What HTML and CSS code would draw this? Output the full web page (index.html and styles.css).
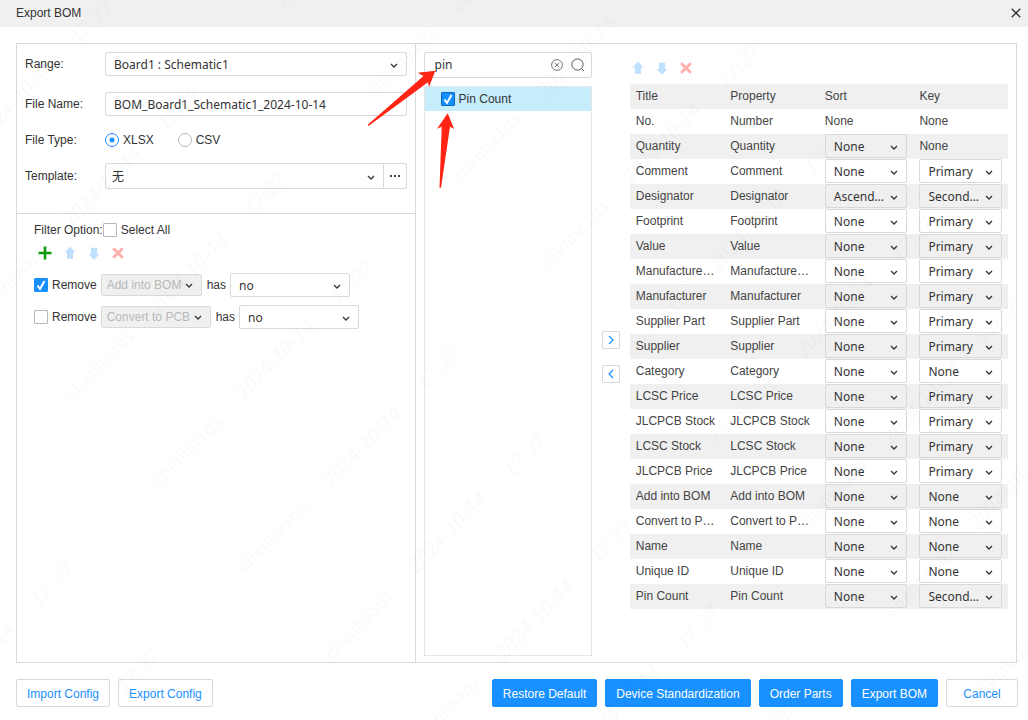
FILE: index.html
```html
<!DOCTYPE html>
<html lang="en">
<head>
<meta charset="utf-8">
<title>Export BOM</title>
<link rel="stylesheet" href="styles.css">
</head>
<body>
<svg class="sprite" aria-hidden="true">
  <symbol id="i-up" viewBox="0 0 12 14"><path d="M6 .8L11.500 6.500H9V12.800H3V6.500H.5Z" fill="#bfdfff"/></symbol>
  <symbol id="i-down" viewBox="0 0 12 14"><path d="M6 13.800L.5 8H3V1.800H9V8H11.500Z" fill="#bfdfff"/></symbol>
  <symbol id="i-x" viewBox="0 0 12 12"><path d="M1.200 1.200L10.800 10.800M10.800 1.200L1.200 10.800" stroke="#ffb0b0" stroke-width="3"/></symbol>
  <symbol id="i-plus" viewBox="0 0 14 14"><path d="M7 .5V13.500M.5 7H13.500" stroke="#0a9b0a" stroke-width="2.600"/></symbol>
</svg>

<header class="titlebar">
  <h1 class="title">Export BOM</h1>
  <button class="close" type="button" aria-label="Close"><svg width="10" height="10" viewBox="0 0 10 10"><path d="M.7 .7L9.300 9.300M9.300 .7L.7 9.300" stroke="#333" stroke-width="1.300"/></svg></button>
</header>

<main class="panel">
  <section class="left">
    <form class="settings">
      <div class="field"><label class="label" for="range">Range:</label>
        <select class="select grow" id="range"><option>Board1 : Schematic1</option></select></div>
      <div class="field"><label class="label" for="fname">File Name:</label>
        <input class="text grow" id="fname" type="text" value="BOM_Board1_Schematic1_2024-10-14"></div>
      <div class="field short"><span class="label">File Type:</span>
        <label class="choice"><input class="radio" type="radio" name="type" checked><span class="lift">XLSX</span></label>
        <label class="choice"><input class="radio" type="radio" name="type"><span class="lift">CSV</span></label></div>
      <div class="field"><label class="label" for="tpl">Template:</label>
        <select class="select tall grow" id="tpl"><option>无</option></select>
        <button class="more" type="button" aria-label="More templates"><svg width="10" height="2" viewBox="0 0 10 2"><path d="M0 0h2v2H0zM4 0h2v2H4zM8 0h2v2H8z" fill="#444"/></svg></button></div>
    </form>
    <div class="filters">
      <div class="filter-head"><span class="lift">Filter Option:</span><input class="check" id="all" type="checkbox"><label class="lift after" for="all">Select All</label></div>
      <div class="tools">
        <button class="tool" type="button" aria-label="Add"><svg width="14" height="14"><use href="#i-plus"/></svg></button>
        <button class="tool" type="button" aria-label="Move up"><svg width="12" height="14"><use href="#i-up"/></svg></button>
        <button class="tool" type="button" aria-label="Move down"><svg width="12" height="14"><use href="#i-down"/></svg></button>
        <button class="tool" type="button" aria-label="Delete"><svg width="12" height="12"><use href="#i-x"/></svg></button>
      </div>
      <div class="rule"><input class="check" id="r1" type="checkbox" checked><label class="lift remove" for="r1">Remove</label>
        <select class="select prop" disabled aria-label="Property"><option>Add into BOM</option></select><span class="lift has">has</span>
        <select class="select value" aria-label="Value"><option>no</option></select></div>
      <div class="rule"><input class="check" id="r2" type="checkbox"><label class="lift remove" for="r2">Remove</label>
        <select class="select prop" disabled aria-label="Property"><option>Convert to PCB</option></select><span class="lift has">has</span>
        <select class="select value" aria-label="Value"><option>no</option></select></div>
    </div>
  </section>

  <section class="right">
    <div class="source">
      <div class="search">
        <input class="query" type="text" value="pin" aria-label="Search properties">
        <button class="tool" type="button" aria-label="Clear"><svg width="12" height="12" viewBox="0 0 12 12" fill="none" stroke="#666" stroke-width=".9"><circle cx="6" cy="6" r="5.400"/><path d="M3.800 3.800L8.200 8.200M8.200 3.800L3.800 8.200"/></svg></button>
        <button class="tool" type="button" aria-label="Search"><svg width="14" height="14" viewBox="0 0 14 14" fill="none" stroke="#555"><circle cx="6.500" cy="6.500" r="5.600"/><path d="M10.600 10.600L13 13"/></svg></button>
      </div>
      <div class="list">
        <label class="item"><input class="check ringed" type="checkbox" checked><span class="lift after">Pin Count</span></label>
      </div>
    </div>
    <div class="movers">
      <button class="mover" type="button" aria-label="Add column"><svg width="6" height="10" viewBox="0 0 6 10"><path d="M1 1L5 5L1 9" fill="none" stroke="#1890ff" stroke-width="1.200"/></svg></button>
      <button class="mover" type="button" aria-label="Remove column"><svg width="6" height="10" viewBox="0 0 6 10"><path d="M5 1L1 5L5 9" fill="none" stroke="#1890ff" stroke-width="1.200"/></svg></button>
    </div>
    <div class="columns">
      <div class="tools">
        <button class="tool" type="button" aria-label="Move up"><svg width="12" height="14"><use href="#i-up"/></svg></button>
        <button class="tool" type="button" aria-label="Move down"><svg width="12" height="14"><use href="#i-down"/></svg></button>
        <button class="tool" type="button" aria-label="Delete"><svg width="12" height="12"><use href="#i-x"/></svg></button>
      </div>
      <table class="grid">
        <thead><tr><th>Title</th><th>Property</th><th>Sort</th><th>Key</th></tr></thead>
        <tbody>
          <tr><td>No.</td><td>Number</td><td>None</td><td>None</td></tr>
          <tr><td>Quantity</td><td>Quantity</td><td><select class="select" aria-label="Sort"><option>None</option></select></td><td>None</td></tr>
          <tr><td>Comment</td><td>Comment</td><td><select class="select" aria-label="Sort"><option>None</option></select></td><td><select class="select" aria-label="Key"><option>Primary</option></select></td></tr>
          <tr><td>Designator</td><td>Designator</td><td><select class="select" aria-label="Sort"><option>Ascending</option></select></td><td><select class="select" aria-label="Key"><option>Secondary</option></select></td></tr>
          <tr><td>Footprint</td><td>Footprint</td><td><select class="select" aria-label="Sort"><option>None</option></select></td><td><select class="select" aria-label="Key"><option>Primary</option></select></td></tr>
          <tr><td>Value</td><td>Value</td><td><select class="select" aria-label="Sort"><option>None</option></select></td><td><select class="select" aria-label="Key"><option>Primary</option></select></td></tr>
          <tr><td>Manufacturer Part</td><td>Manufacturer Part</td><td><select class="select" aria-label="Sort"><option>None</option></select></td><td><select class="select" aria-label="Key"><option>Primary</option></select></td></tr>
          <tr><td>Manufacturer</td><td>Manufacturer</td><td><select class="select" aria-label="Sort"><option>None</option></select></td><td><select class="select" aria-label="Key"><option>Primary</option></select></td></tr>
          <tr><td>Supplier Part</td><td>Supplier Part</td><td><select class="select" aria-label="Sort"><option>None</option></select></td><td><select class="select" aria-label="Key"><option>Primary</option></select></td></tr>
          <tr><td>Supplier</td><td>Supplier</td><td><select class="select" aria-label="Sort"><option>None</option></select></td><td><select class="select" aria-label="Key"><option>Primary</option></select></td></tr>
          <tr><td>Category</td><td>Category</td><td><select class="select" aria-label="Sort"><option>None</option></select></td><td><select class="select" aria-label="Key"><option>None</option></select></td></tr>
          <tr><td>LCSC Price</td><td>LCSC Price</td><td><select class="select" aria-label="Sort"><option>None</option></select></td><td><select class="select" aria-label="Key"><option>Primary</option></select></td></tr>
          <tr><td>JLCPCB Stock</td><td>JLCPCB Stock</td><td><select class="select" aria-label="Sort"><option>None</option></select></td><td><select class="select" aria-label="Key"><option>Primary</option></select></td></tr>
          <tr><td>LCSC Stock</td><td>LCSC Stock</td><td><select class="select" aria-label="Sort"><option>None</option></select></td><td><select class="select" aria-label="Key"><option>Primary</option></select></td></tr>
          <tr><td>JLCPCB Price</td><td>JLCPCB Price</td><td><select class="select" aria-label="Sort"><option>None</option></select></td><td><select class="select" aria-label="Key"><option>Primary</option></select></td></tr>
          <tr><td>Add into BOM</td><td>Add into BOM</td><td><select class="select" aria-label="Sort"><option>None</option></select></td><td><select class="select" aria-label="Key"><option>None</option></select></td></tr>
          <tr><td>Convert to PCB</td><td>Convert to PCB</td><td><select class="select" aria-label="Sort"><option>None</option></select></td><td><select class="select" aria-label="Key"><option>None</option></select></td></tr>
          <tr><td>Name</td><td>Name</td><td><select class="select" aria-label="Sort"><option>None</option></select></td><td><select class="select" aria-label="Key"><option>None</option></select></td></tr>
          <tr><td>Unique ID</td><td>Unique ID</td><td><select class="select" aria-label="Sort"><option>None</option></select></td><td><select class="select" aria-label="Key"><option>None</option></select></td></tr>
          <tr><td>Pin Count</td><td>Pin Count</td><td><select class="select" aria-label="Sort"><option>None</option></select></td><td><select class="select" aria-label="Key"><option>Secondary</option></select></td></tr>
        </tbody>
      </table>
    </div>
  </section>
</main>

<footer class="footer">
  <button class="btn" type="button">Import Config</button>
  <button class="btn" type="button">Export Config</button>
  <span class="spacer"></span>
  <button class="btn primary" type="button">Restore Default</button>
  <button class="btn primary" type="button">Device Standardization</button>
  <button class="btn primary" type="button">Order Parts</button>
  <button class="btn primary" type="button">Export BOM</button>
  <button class="btn wide" type="button">Cancel</button>
</footer>

<svg class="overlay watermark" aria-hidden="true">
  <defs>
    <g id="mark">
      <text class="who" transform="translate(72 401) rotate(-46)">chenhaiqi</text>
      <text transform="translate(244 401) rotate(-46)">2024-10-14</text>
      <text transform="translate(425 391) rotate(-46)">17:27</text>
    </g>
    <g id="diag">
      <use href="#mark" x="-346" y="-346"/><use href="#mark" x="-259" y="-259"/><use href="#mark" x="-173" y="-173"/><use href="#mark" x="-86" y="-86"/>
      <use href="#mark"/><use href="#mark" x="87" y="87"/><use href="#mark" x="173" y="173"/><use href="#mark" x="260" y="260"/><use href="#mark" x="346" y="346"/>
    </g>
  </defs>
  <use href="#diag" x="-646" y="-43"/><use href="#diag"/><use href="#diag" x="560" y="-43"/>
</svg>
<svg class="overlay" aria-hidden="true">
  <path fill="#ff2414" d="M435.300 70.700L417.700 72.700L423.500 76L367.700 124.800L368.500 126L428 82.300L429 87Z"/>
  <path fill="#ff2414" d="M447.700 113.300L437 128.800L441.700 126.700L439.500 187.800H441L450 126.700L454.200 129Z"/>
</svg>
</body>
</html>
```

FILE: styles.css
```css
* { box-sizing: border-box; }
body {
  margin: 0;
  min-height: 100vh;
  display: flex;
  flex-direction: column;
  position: relative;
  background: #fff;
  color: #333;
  font: 12px/16px "Liberation Sans", Arial, "Noto Sans CJK SC", sans-serif;
}
button, input, select { font: inherit; color: inherit; margin: 0; }
button { cursor: pointer; }
.sprite { position: absolute; width: 0; height: 0; }

.titlebar {
  display: flex;
  align-items: center;
  justify-content: space-between;
  height: 27px;
  padding: 0 7px 1px 16px;
  background: #f0f0f0;
}
.title { margin: 0; font-size: 12px; font-weight: normal; }
.close, .tool { display: flex; padding: 0; border: 0; background: none; }

.panel {
  flex: 1;
  display: flex;
  margin: 16px 11px 0 16px;
  border: 1px solid #d9d9d9;
}
.left { flex: 0 0 39.9%; border-right: 1px solid #d9d9d9; }
.settings { padding: 0 8px 17px; border-bottom: 1px solid #d9d9d9; }
.field { display: flex; align-items: center; height: 40px; }
.field.short { height: 32px; }
.label { width: 80px; padding-bottom: 1px; }
.short .label { padding-bottom: 0; }
.grow { flex: 1; min-width: 0; }
.lift { padding-bottom: 1px; }
.after { margin-left: 4px; }

.select, .text {
  height: 24px;
  padding: 1px 8px 0;
  border: 1px solid #d9d9d9;
  border-radius: 2px;
  background-color: transparent;
  font: 12px/20px "Noto Sans", "Noto Sans CJK SC", sans-serif;
}
.select {
  appearance: none;
  padding-right: 20px;
  background-image: url("data:image/svg+xml,%3Csvg xmlns='http://www.w3.org/2000/svg' width='8' height='6'%3E%3Cpath d='M1 1l3 3 3-3' fill='none' stroke='%23333' stroke-width='1.300'/%3E%3C/svg%3E");
  background-repeat: no-repeat;
  background-position: right 8px top 10px;
  text-overflow: ellipsis;
  overflow: hidden;
  white-space: nowrap;
}
.select.tall { height: 26px; padding-left: 6px; border-radius: 2px 0 0 2px; background-position: right 8px top 11px; }
.more {
  display: flex;
  align-items: center;
  justify-content: center;
  width: 24px;
  height: 26px;
  margin-left: -1px;
  padding: 0;
  border: 1px solid #d9d9d9;
  border-radius: 0 2px 2px 0;
  background: none;
}
.choice { display: flex; align-items: center; margin-right: 24px; }
.radio {
  appearance: none;
  width: 14px;
  height: 14px;
  margin-right: 4px;
  border: 1px solid #b8b8b8;
  border-radius: 50%;
}
.radio:checked { border-color: #1890ff; background: radial-gradient(circle, #1890ff 2px, transparent 3px); }
.check {
  appearance: none;
  flex: none;
  width: 14px;
  height: 14px;
  border: 1px solid #b8b8b8;
  border-radius: 1px;
}
.check:checked {
  border-color: #1890ff;
  background: #1890ff url("data:image/svg+xml,%3Csvg xmlns='http://www.w3.org/2000/svg' width='12' height='12'%3E%3Cpath d='M2.500 6.500l2.500 3.500L9.500 2' fill='none' stroke='white' stroke-width='2'/%3E%3C/svg%3E") center no-repeat;
}
.check.ringed { border-color: #0b66bd; }

.filters { padding: 6px 17px; }
.filter-head { display: flex; align-items: center; height: 20px; }
.tools { display: flex; align-items: center; }
.filters .tools { gap: 12px; height: 26px; padding-left: 4px; margin-bottom: 3px; }
.rule { display: flex; align-items: center; height: 32px; }
.remove { margin: 0 4px; }
.has { margin: 0 4px 0 5px; }
.value { width: 120px; }
.prop {
  height: 22px;
  padding: 0 19px 0 5px;
  background-color: #f0f0f0;
  background-position: right 8px top 8px;
  color: #b8b8b8;
  font: 12px/20px "Liberation Sans", Arial, sans-serif;
  opacity: 1;
}

.right { flex: 1; display: flex; gap: 10px; min-width: 0; padding: 8px 8px 6px; }
.source { flex: 168 1 0; display: flex; flex-direction: column; gap: 8px; min-width: 0; }
.search {
  display: flex;
  align-items: center;
  gap: 8px;
  height: 26px;
  padding: 0 6px 0 10px;
  border: 1px solid #d9d9d9;
  border-radius: 2px;
}
.query { flex: 1; min-width: 0; padding: 0; border: 0; background: none; font: 12px/20px "Noto Sans", sans-serif; }
.list { flex: 1; border: 1px solid #e6e6e6; }
.item { display: flex; align-items: center; height: 24px; padding-left: 16px; background: #c5edfb; }
.movers { flex: none; display: flex; flex-direction: column; justify-content: center; gap: 16px; padding-top: 6px; }
.mover {
  display: flex;
  align-items: center;
  justify-content: center;
  width: 18px;
  height: 18px;
  padding: 0;
  border: 1px solid #d9d9d9;
  border-radius: 1px;
  background: none;
}
.columns { flex: 378 1 0; min-width: 0; }
.columns .tools { gap: 12px; height: 32px; padding-left: 2px; }
.grid { width: 100%; table-layout: fixed; border-collapse: collapse; color: #444; }
.grid th, .grid td {
  height: 25px;
  padding: 0 6px 1px;
  overflow: hidden;
  text-overflow: ellipsis;
  white-space: nowrap;
  text-align: left;
  font-weight: normal;
}
.grid th, .grid tr:nth-child(even) td { background: #f0f0f0; }
.grid .select { display: block; width: 100%; color: #333; }

.footer { display: flex; gap: 8px; padding: 16px 10px 13px 16px; }
.spacer { flex: 1; }
.btn {
  height: 28px;
  padding: 1px 10px 0;
  border: 1px solid #d9d9d9;
  border-radius: 2px;
  background: #fff;
  color: #1890ff;
}
.btn.primary { border-color: #1890ff; background: #1890ff; color: #fff; }
.btn.wide { min-width: 72px; }

.overlay { position: absolute; top: 0; left: 0; width: 100%; height: 100%; overflow: hidden; pointer-events: none; }
.watermark { font: italic 22px "Liberation Serif", serif; fill: #000; opacity: 0.025; }
.who { font: 17px "Liberation Mono", monospace; }
```
